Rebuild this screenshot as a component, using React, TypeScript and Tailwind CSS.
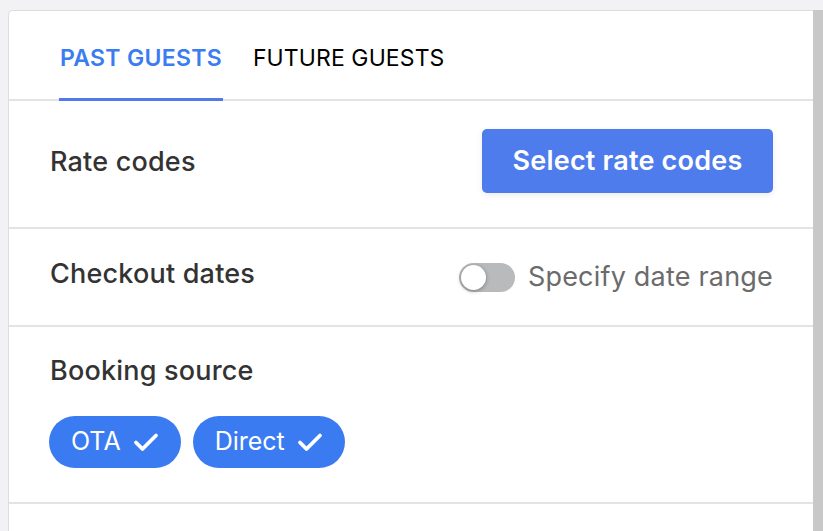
import React from 'react'

function Check() {
  return (
    <svg width="26" height="20" viewBox="0 0 26 20" fill="none" className="shrink-0">
      <path d="M3 10.5 L9.5 17 L23 3.5" stroke="white" strokeWidth="3.8" strokeLinecap="round" strokeLinejoin="round" />
    </svg>
  )
}

function Chip({ label }: { label: string }) {
  return (
    <button className="flex h-[52px] items-center gap-[12px] rounded-full bg-[#3a7bf2] pl-[22px] pr-[22px] text-[25px] text-white">
      <span>{label}</span>
      <Check />
    </button>
  )
}

export default function App() {
  const [tab, setTab] = React.useState<'past' | 'future'>('past')
  const [range, setRange] = React.useState(false)

  const tabCls = (on: boolean) =>
    `-mb-[2px] flex items-center border-b-[3px] px-[1px] pt-[6px] text-[23px] leading-[28px] ${on ? 'border-[#4f7ae8] font-semibold tracking-[0.3px] text-[#3b7cf0]' : 'border-transparent tracking-[0.1px] text-black'}`

  return (
    <div className="flex h-screen bg-[#f2f2f4] pl-[8px] pt-[10px] font-['Inter',sans-serif]">
      <div className="flex-1 overflow-hidden rounded-tl-[5px] border-l border-t border-[#dddddd] bg-white">
        {/* tabs */}
        <div className="flex h-[90px] gap-[29px] border-b-2 border-[#e3e3e3] pl-[50px]">
          <button onClick={() => setTab('past')} className={tabCls(tab === 'past')}>
            PAST GUESTS
          </button>
          <button onClick={() => setTab('future')} className={tabCls(tab === 'future')}>
            FUTURE GUESTS
          </button>
        </div>

        {/* rate codes */}
        <div className="flex h-[128px] items-center justify-between border-b-2 border-[#e3e3e3] pl-[41px] pr-[40px]">
          <span className="mb-[4px] text-[27px] leading-[32px] font-medium tracking-[0.2px] text-[#333333]">Rate codes</span>
          <button className="mb-[6px] h-[64px] w-[291px] rounded-[5px] bg-[#4f7cec] text-[27px] font-semibold tracking-[0.2px] text-white shadow-[0_2px_6px_rgba(0,0,0,0.08)]">
            Select rate codes
          </button>
        </div>

        {/* checkout dates */}
        <div className="flex h-[98px] items-center justify-between border-b-2 border-[#e3e3e3] pl-[41px] pr-[40px]">
          <span className="-mt-[6px] text-[27px] leading-[32px] font-medium tracking-[0.2px] text-[#333333]">Checkout dates</span>
          <label className="flex items-center gap-[13px]">
            <button
              onClick={() => setRange(!range)}
              className={`relative h-[29px] w-[56px] rounded-full ${range ? 'bg-[#4f7cec]' : 'bg-[#b9babc]'}`}
            >
              <span
                className={`absolute top-[2px] h-[25px] w-[25px] rounded-full bg-white shadow-[0_1px_4px_rgba(0,0,0,0.35)] ${range ? 'left-[29px]' : 'left-[2px]'}`}
              />
            </button>
            <span className="text-[27px] leading-[32px] tracking-[0.2px] text-[#6b6b6b]">Specify date range</span>
          </label>
        </div>

        {/* booking source */}
        <div className="flex h-[177px] flex-col border-b-2 border-[#e3e3e3] pl-[41px] pt-[28px]">
          <span className="text-[27px] leading-[32px] font-medium tracking-[0.2px] text-[#333333]">Booking source</span>
          <div className="-ml-[1px] mt-[29px] flex gap-[12px]">
            <Chip label="OTA" />
            <Chip label="Direct" />
          </div>
        </div>
      </div>
      <div className="w-[10px] bg-[#c8c8c8]" />
    </div>
  )
}
